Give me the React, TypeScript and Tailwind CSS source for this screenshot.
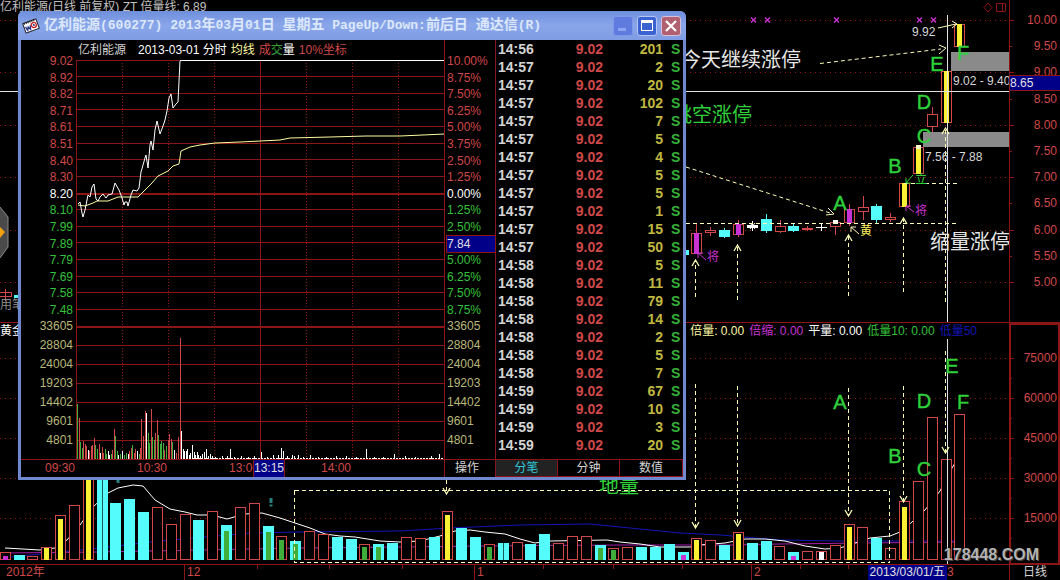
import { useState } from "react";

const RED = "#d04848";
const GREEN = "#2fd03a";
const CYAN = "#54fcfc";
const YELLOW = "#fcf034";
const MAGENTA = "#c832d2";
const DASH = "#fcfcb4";
const GRID = "#8c1616";

const fills: Record<string, string> = {
  r: RED,
  g: "#3fae3a",
  c: CYAN,
  y: YELLOW,
  m: MAGENTA,
  w: "#ffffff",
};

const priceTicks = ["10.00", "9.50", "9.00", "8.50", "8.00", "7.50", "7.00", "6.50", "6.00", "5.50", "5.00"];
const volumeTicks = ["75000", "60000", "45000", "30000", "15000"];
const minutePrices = [
  "9.02", "8.92", "8.82", "8.71", "8.61", "8.51", "8.40", "8.30",
  "8.20", "8.10", "7.99", "7.89", "7.79", "7.69", "7.58", "7.48",
];
const minutePercents = [
  "10.00%", "8.75%", "7.50%", "6.25%", "5.00%", "3.75%", "2.50%", "1.25%",
  "0.00%", "1.25%", "2.50%", "7.84", "5.00%", "6.25%", "7.50%", "8.75%",
];
const minuteVolumes = ["33605", "28804", "24004", "19203", "14402", "9601", "4801"];

const trades: [string, number][] = [
  ["14:56", 201], ["14:57", 2], ["14:57", 20], ["14:57", 102], ["14:57", 7], ["14:57", 5],
  ["14:57", 4], ["14:57", 5], ["14:57", 5], ["14:57", 1], ["14:57", 15], ["14:57", 50],
  ["14:58", 5], ["14:58", 11], ["14:58", 79], ["14:58", 14], ["14:58", 2], ["14:58", 5],
  ["14:58", 7], ["14:59", 67], ["14:59", 10], ["14:59", 3], ["14:59", 20],
];

// x, body top, body bottom, wick top, wick bottom, kind, inner fill
type Candle = [number, number, number, number, number, string, string?];
const candles: Candle[] = [
  [678, 250, 254, 250, 254, "c"],
  [691, 233, 253, 224, 254, "r", "m"],
  [705, 230, 232, 227, 236, "r"],
  [719, 230, 236, 228, 238, "c"],
  [733, 224, 234, 220, 237, "r", "m"],
  [747, 225, 227, 221, 231, "w"],
  [761, 219, 230, 214, 233, "c"],
  [775, 226, 231, 220, 233, "r"],
  [788, 226, 230, 224, 232, "c"],
  [802, 228, 229, 226, 231, "r"],
  [816, 227, 227, 223, 231, "w"],
  [830, 222, 226, 220, 235, "r"],
  [844, 209, 222, 204, 226, "r", "m"],
  [858, 207, 211, 196, 220, "r"],
  [871, 206, 219, 204, 223, "c"],
  [885, 217, 219, 213, 222, "r"],
  [899, 183, 206, 183, 206, "r", "y"],
  [913, 147, 173, 147, 173, "r", "y"],
  [927, 114, 126, 107, 132, "r"],
  [941, 71, 122, 71, 122, "r", "y"],
  [954, 24, 46, 24, 46, "r", "y"],
];

// x, top, kind, inner kind, inner top
type VolumeBar = [number, number, string, string?, number?];
const volumes: VolumeBar[] = [
  [0, 552, "r", "m", 556], [14, 555, "c"], [27, 556, "r"], [41, 547, "r", "y", 548], [55, 515, "r", "y", 519],
  [69, 505, "r"], [83, 470, "r", "y", 472], [97, 470, "c"], [110, 503, "c"], [124, 499, "c"], [138, 512, "c"],
  [152, 507, "r"], [166, 524, "r"], [180, 514, "r"], [193, 520, "c"], [207, 511, "r"], [221, 525, "c", "g", 531],
  [235, 507, "r"], [249, 503, "r"], [263, 526, "c", "g", 532], [276, 536, "r", "g", 540], [290, 541, "c", "g", 544],
  [304, 531, "r"], [318, 534, "r"], [332, 537, "c"], [346, 539, "c"], [359, 544, "r", "g", 547],
  [373, 544, "c", "g", 547], [387, 543, "c"], [401, 537, "r"], [415, 538, "r"], [429, 537, "c"],
  [442, 511, "r", "y", 515], [456, 528, "c"], [470, 537, "c"], [484, 544, "r", "g", 547], [498, 543, "c"],
  [512, 542, "r"], [525, 544, "c"], [539, 534, "c"], [553, 543, "r"], [567, 536, "r"], [581, 536, "r"],
  [595, 545, "c", "g", 548], [608, 548, "r", "g", 550], [622, 547, "r"], [636, 547, "c"], [650, 547, "c"],
  [664, 544, "c"], [678, 552, "c", "m", 555], [691, 538, "r", "y", 540], [705, 540, "r"], [719, 545, "c"],
  [733, 532, "r", "y", 534], [747, 543, "c"], [761, 541, "c"], [774, 546, "r"], [788, 552, "c", "m", 556],
  [802, 551, "r"], [816, 551, "r", "w", 552], [830, 545, "r"], [844, 524, "r", "y", 527], [857, 527, "r"],
  [871, 538, "c"], [885, 548, "r"], [899, 501, "r", "y", 507], [913, 481, "r"], [927, 417, "r"],
  [941, 459, "r"], [954, 414, "r"],
];

// x, top, kind
const minuteBars: [number, number, string][] = [
  [77, 404, "g"], [79, 418, "r"], [80, 442, "g"], [82, 448, "g"], [83, 441, "r"], [85, 444, "r"], [86, 446, "r"],
  [88, 450, "w"], [89, 451, "r"], [91, 446, "r"], [92, 445, "r"], [94, 438, "r"], [95, 445, "g"], [97, 449, "g"],
  [99, 444, "r"], [100, 453, "w"], [102, 447, "r"], [103, 453, "r"], [105, 449, "g"], [106, 454, "g"], [108, 451, "w"],
  [109, 455, "w"], [111, 454, "g"], [112, 450, "r"], [114, 429, "r"], [115, 436, "g"], [117, 451, "g"],
  [118, 455, "w"], [120, 454, "g"], [122, 451, "w"], [124, 455, "g"], [126, 453, "g"], [128, 454, "w"],
  [129, 451, "r"], [131, 448, "r"], [132, 445, "g"], [134, 453, "r"], [135, 449, "r"], [137, 451, "w"],
  [139, 454, "g"], [140, 448, "r"], [141, 419, "r"], [143, 436, "r"], [145, 411, "r"], [146, 413, "w"],
  [148, 433, "g"], [149, 443, "g"], [151, 409, "r"], [152, 437, "g"], [154, 440, "g"], [155, 433, "r"],
  [157, 420, "r"], [158, 435, "g"], [160, 444, "g"], [161, 441, "g"], [163, 443, "g"], [164, 450, "r"],
  [166, 446, "g"], [168, 440, "r"], [169, 434, "r"], [171, 439, "r"], [172, 442, "g"], [174, 450, "w"],
  [176, 453, "r"], [178, 437, "r"], [180, 338, "r"], [181, 431, "w"], [183, 449, "w"], [184, 451, "w"],
  [186, 451, "w"], [187, 449, "w"], [189, 455, "w"], [190, 453, "w"], [192, 445, "w"], [194, 452, "w"],
  [195, 455, "w"], [197, 452, "w"], [198, 455, "w"], [200, 456, "w"], [202, 454, "w"], [204, 452, "w"],
  [206, 449, "w"], [208, 456, "w"], [210, 454, "w"], [212, 456, "w"], [215, 457, "w"], [222, 456, "w"],
  [227, 456, "w"], [230, 449, "w"], [234, 457, "w"], [241, 456, "w"], [248, 457, "w"], [254, 456, "w"],
  [261, 452, "w"], [267, 457, "w"], [273, 455, "w"], [278, 455, "w"], [281, 448, "w"], [283, 451, "w"],
  [287, 456, "w"], [292, 455, "w"], [294, 456, "w"], [298, 455, "w"], [303, 457, "w"], [310, 455, "w"],
  [318, 457, "w"], [326, 457, "w"], [336, 456, "w"], [346, 456, "w"], [356, 457, "w"], [366, 449, "w"],
  [374, 457, "w"], [383, 457, "w"], [394, 454, "w"], [405, 456, "w"], [415, 457, "w"], [431, 456, "w"],
  [439, 454, "w"],
];

const upArrows = [[695, 297, 260], [737, 300, 245], [848, 296, 235], [903, 292, 218], [945, 302, 128]];
const downArrows = [[446, 480, 494], [695, 384, 528], [737, 386, 526], [848, 388, 516], [903, 386, 502], [945, 351, 453]];

const Letter = ({ x, y, children }: { x: number; y: number; children: string }) => (
  <text x={x} y={y} dy={7} fontSize={20} textAnchor="middle" fill={GREEN} stroke={GREEN} strokeWidth={0.4}>
    {children}
  </text>
);

const DashArrow = ({ x, from, to }: { x: number; from: number; to: number }) => {
  const back = from > to ? 6 : -6;
  return (
    <g fill="none" stroke={DASH}>
      <path d={`M${x + 0.5} ${from}V${to}`} strokeDasharray="4 3" />
      <path d={`M${x - 3} ${to + back}L${x + 0.5} ${to}L${x + 4} ${to + back}`} strokeWidth={1.3} />
    </g>
  );
};

const PriceChart = () => (
  <svg viewBox="0 14 1009 308" className="block min-h-0 w-full flex-1 overflow-visible">
    <g shapeRendering="crispEdges">
      {[20, 72, 125, 177, 230, 282].map((y) => (
        <path key={y} d={`M0 ${y + 0.5}H1009`} stroke={GRID} strokeDasharray="1 4" />
      ))}
      {priceTicks.map((t, i) => (
        <path key={t} d={`M1009 ${20.5 + Math.round(i * 26.2)}h${i % 2 ? 3 : 5}`} stroke={GRID} />
      ))}
      <rect x={951} y={52} width={58} height={19} fill="#8a8a8a" />
      <rect x={923} y={132} width={86} height={15} fill="#8a8a8a" />
      {candles.map(([x, top, bottom, high, low, kind, inner]) => (
        <g key={x}>
          <path d={`M${x + 5.5} ${high}V${low}`} stroke={fills[kind]} />
          {kind === "r" ? (
            <rect x={x + 0.5} y={top + 0.5} width={10} height={bottom - top} fill="#000" stroke={RED} />
          ) : (
            <rect x={x} y={top} width={11} height={bottom - top + 1} fill={fills[kind]} />
          )}
          {inner && <rect x={x + 3} y={top} width={5} height={bottom - top + 1} fill={fills[inner]} />}
        </g>
      ))}
      <rect x={833} y={220} width={5} height={4} fill="#fff" />
      <rect x={916} y={145} width={5} height={4} fill="#fff8c8" />
      <path d="M0 292.5H11V296H0M5.5 289V301" fill="none" stroke={RED} />
      <rect x={14} y={295} width={6} height={3} fill={CYAN} />
      <path d="M0 91.5H1009M947.5 15V322" stroke="#e0e0e0" />
    </g>
    <path d="M750 223l5 6M755 223l-5 6" stroke="#fff" />

    <g stroke={MAGENTA} strokeWidth={1.4}>
      {[753, 767, 836, 919, 933].map((x) => (
        <path key={x} d={`M${x - 2} 17.500l5 5M${x + 3} 17.500l-5 5`} />
      ))}
    </g>

    <g fill="none" stroke={DASH} strokeDasharray="4 3">
      <path d="M686 223.5H958M904 183.5H960" />
      <path d="M820 63.5L941 49M686 167L830 213" />
    </g>
    <g fill="none" stroke={DASH}>
      <path d="M939 45l7 3l-7 6M828 208l6 6l-8 1" />
      <path d="M938 28l18-4M952 21l5 3l-5 4" />
      <path d="M859 234l-8-7v5M851 227h5" />
    </g>
    <g fill="none" stroke={MAGENTA}>
      <path d="M706 260l-8-7v5M698 253h5M914 212l-8-6v5M906 206h5" />
    </g>
    <path d="M913 175l-7 8v-5M906 183h5" fill="none" stroke={GREEN} />
    {upArrows.map(([x, from, to]) => (
      <DashArrow key={x} x={x} from={from} to={to} />
    ))}

    <g fontSize={12} fill="#d8d8d8">
      <text x={912} y={36}>9.92</text>
      <text x={953} y={85}>9.02 - 9.40</text>
      <text x={925} y={161}>7.56 - 7.88</text>
      <text x={0} y={309} fill="#8a8a8a">用笔</text>
      <text x={707} y={261} fill={MAGENTA}>将</text>
      <text x={915} y={215} fill={MAGENTA}>将</text>
      <text x={860} y={235} fill="#fcf060">黄</text>
      <text x={915} y={184} fill={GREEN}>立</text>
    </g>
    <g fontSize={20} fill="#e6e6e6">
      <text x={681} y={67}>今天继续涨停</text>
      <text x={672} y={122} fill={GREEN}>跳空涨停</text>
      <text x={930} y={249}>缩量涨停</text>
    </g>
    <Letter x={840} y={203}>A</Letter>
    <Letter x={895} y={166}>B</Letter>
    <Letter x={924} y={136}>C</Letter>
    <Letter x={924} y={102}>D</Letter>
    <Letter x={937} y={64}>E</Letter>
    <Letter x={963} y={53}>F</Letter>

    <path d="M0 207L8 217V247L0 258" fill="#4a4a4a" stroke="#8a8a8a" />
    <path d="M0 227L5 232L0 238Z" fill="#f0a010" />
  </svg>
);

const VolumeChart = () => (
  <svg viewBox="0 339 1009 225" className="block min-h-0 w-full flex-1 overflow-visible">
    <g shapeRendering="crispEdges">
      {[358, 398, 438, 478, 518].map((y) => (
        <g key={y} stroke={GRID}>
          <path d={`M0 ${y + 0.5}H1009`} strokeDasharray="1 4" />
          <path d={`M1009 ${y + 0.5}h5M1009 ${y + 20.5}h3`} />
        </g>
      ))}
      {[257, 329, 402, 543, 613, 682, 800, 848].map((x) => (
        <path key={x} d={`M${x + 0.5} 565v4`} stroke={GRID} />
      ))}
    </g>
    <g fill="none">
      <path
        d="M0 558L100 548L150 542L250 533L300 532L400 531L450 528L520 525L590 524L630 528L680 533L720 535L780 540L840 541L955 541"
        stroke="#1414b4"
      />
      <path d="M0 553L100 552L200 550L300 548L400 547L480 546L620 545L730 545L780 544L955 542" stroke="#a01ea8" />
      <path
        d="M5 548L40 550L55 548L67 540L80 525L93 507L108 493L118 488L133 485L143 486L155 500L170 509L185 512L197 515L212 515L227 519L245 514L262 513L280 518L295 523L310 528L325 534L340 536L355 537L380 541L400 542L420 541L440 536L455 531L470 530L485 532L505 534L520 539L535 543L550 541L607 540L620 542L640 544L660 547L690 547L700 545L725 543L745 539L765 539L785 541L805 546L825 549L840 548L855 543L870 538L890 536L900 532L912 522L925 510L940 491L952 468L960 455"
        stroke="#fff"
      />
    </g>
    <g shapeRendering="crispEdges">
      {volumes.map(([x, top, kind, inner, innerTop]) => (
        <g key={x}>
          {kind === "r" ? (
            <rect x={x + 0.5} y={top + 0.5} width={10} height={559 - top} fill="#000" stroke={RED} />
          ) : (
            <rect x={x} y={top} width={11} height={560 - top} fill={fills[kind]} />
          )}
          {inner && <rect x={x + 3} y={innerTop} width={5} height={560 - innerTop!} fill={fills[inner]} />}
        </g>
      ))}
      <path d="M102.5 478V560M503.5 543V560" stroke="#1c5c5c" />
      <path d="M947.5 339V564" stroke="#e0e0e0" />
      <path d="M294.5 490.5H889.5V562.5H294.5Z" fill="none" stroke={DASH} strokeDasharray="4 3" />
    </g>
    {downArrows.map(([x, from, to]) => (
      <DashArrow key={x} x={x} from={from} to={to} />
    ))}
    <path d="M271 498v5M271 504.500v2M118 480v3" stroke="#2a8080" strokeWidth={3} />
    <text x={599} y={493} fontSize={20} fill={GREEN}>地量</text>
    <Letter x={840} y={402}>A</Letter>
    <Letter x={895} y={456}>B</Letter>
    <Letter x={924} y={469}>C</Letter>
    <Letter x={924} y={401}>D</Letter>
    <Letter x={952} y={366}>E</Letter>
    <Letter x={963} y={402}>F</Letter>
  </svg>
);

const MinuteChart = () => (
  <svg viewBox="76 60 368 399" className="block min-h-0 w-full flex-1">
    <g shapeRendering="crispEdges" stroke={GRID}>
      {[76, 93, 109, 126, 143, 159, 176, 209, 226, 242, 259, 276, 292, 309, 345, 364, 383, 402, 421, 440].map((y) => (
        <path key={y} d={`M76 ${y + 0.5}H445`} />
      ))}
      <path d="M76 60.5H445" />
      <path d="M76 194H445M76 327H445" strokeWidth={2} />
      <path d="M76.5 60V459M260.5 60V459" />
      {[122, 168, 214, 306, 352, 398].map((x) => (
        <path key={x} d={`M${x + 0.5} 60V459`} strokeDasharray="1 2" />
      ))}
    </g>
    <g shapeRendering="crispEdges">
      {minuteBars.map(([x, top, kind]) => (
        <rect key={x} x={x} y={top} width={1} height={459 - top} fill={fills[kind]} />
      ))}
      <path d="M183 458.5H445" stroke="#fff" strokeDasharray="2 1" />
      <path d="M180 60.5H445" stroke="#fff" />
    </g>
    <path
      fill="none"
      stroke="#fcfca0"
      d="M78 205L85 206L93 203L97 201L108 201L118 197L138 197L145 190L152 183L158 176L168 171L173 166L179 164L181 151L190 147L200 145L215 143L240 142L260 141L280 140L290 138L330 137L366 136L400 136L445 134"
    />
    <path
      fill="none"
      stroke="#fff"
      d="M78 204L80 202L82 213L83 217L85 210L87 200L88 195L90 197L92 187L94 184L96 199L98 201L100 197L103 194L106 198L108 195L112 194L115 183L119 190L122 198L124 205L125 202L127 202L128 206L131 195L133 190L137 191L139 188L141 172L143 165L145 158L146 155L148 168L150 145L151 141L153 150L155 130L157 121L160 134L163 126L165 120L167 111L169 98L171 94L173 108L176 104L178 102L180 61"
    />
  </svg>
);

const ScaleColumn = ({ prices, className }: { prices: string[]; className: string }) => (
  <div className={`flex flex-col pt-[13px] pb-[11px] leading-4 ${className}`}>
    <ul className="flex flex-[265] flex-col justify-between">
      {prices.map((p, i) => (
        <li
          key={i}
          className={
            p === "7.84"
              ? "bg-[#000088] text-[#e0e0e0] outline outline-[#8c1616]"
              : i < 8
                ? "text-[#d04848]"
                : i === 8
                  ? "text-white"
                  : "text-[#35c03a]"
          }
        >
          {p}
        </li>
      ))}
    </ul>
    <ul className="flex flex-[130] flex-col justify-between text-[#b8b878]">
      {minuteVolumes.map((v) => (
        <li key={v}>{v}</li>
      ))}
    </ul>
  </div>
);

const AppIcon = () => (
  <svg viewBox="0 0 18 16" className="h-4 w-[18px]">
    <g transform="rotate(-20 9 8)">
      <rect x="2" y="3" width="14" height="10" fill="#fff" stroke="#222" />
      <path d="M3 3.5h12" stroke="#111" strokeWidth="2" strokeDasharray="1 1" />
      <path d="M3.500 7l1 4l1.500-3l1.500 3l1-4" fill="none" stroke="#203080" strokeWidth="1.300" />
      <circle cx="12" cy="8" r="2.500" fill="none" stroke="#d02020" strokeWidth="1.300" />
      <circle cx="12" cy="8" r="1" fill="#203080" />
    </g>
  </svg>
);

const TitleBar = () => {
  const title = "亿利能源(600277) 2013年03月01日 星期五 PageUp/Down:前后日 通达信(R)";
  return (
    <header className="flex h-[29px] items-center gap-1 rounded-t-md bg-linear-to-b from-[#6f8fdc] via-[#8aa6ea] to-[#7f9ce4] pr-[5px] pl-1">
      <AppIcon />
      <h1 className="flex-1 truncate font-['Liberation_Mono','Noto_Sans_CJK_SC',monospace] text-[13px] leading-5 font-bold whitespace-pre text-[#dce8fa]">
        {title.split(/([\u4e00-\u9fff]+)/).map((part, i) => (
          <span key={i} className={i % 2 ? "text-sm leading-5" : ""}>
            {part}
          </span>
        ))}
      </h1>
      <button aria-label="最小化" className="flex size-5 items-end rounded-[3px] border border-[#8098e8] bg-[#5f7be0] p-1">
        <span className="h-[3px] w-2 bg-[#8ea4f0]" />
      </button>
      <button aria-label="还原" className="grid size-5 place-items-center rounded-[3px] border border-[#b4c6f6] bg-[#3a62d0]">
        <span className="h-[11px] w-3 border border-t-[3px] border-white" />
      </button>
      <button aria-label="关闭" className="grid size-5 place-items-center rounded-[3px] border border-[#d8c0d8] bg-[#b06070]">
        <svg viewBox="0 0 12 12" className="size-3">
          <path d="M1 1l10 10M11 1L1 11" stroke="#fff" strokeWidth="2.200" />
        </svg>
      </button>
    </header>
  );
};

const TradePanel = () => {
  const [tab, setTab] = useState("分笔");
  return (
    <section className="flex w-[188px] flex-col justify-between border-l border-[#8c1616]">
      <table className="w-full table-fixed text-sm leading-[18px] font-bold">
        <tbody>
          {trades.map(([time, lots], i) => (
            <tr key={i}>
              <td className="w-[50px] pl-0.5 text-[#d4d4d4]">{time}</td>
              <td className="w-[57px] text-right text-[#d04848]">9.02</td>
              <td className="w-[60px] text-right text-[#c0b840]">{lots}</td>
              <td className="pr-1 pl-2 text-[#35b03a]">S</td>
            </tr>
          ))}
        </tbody>
      </table>
      <div className="grid h-[18px] grid-cols-3 divide-x divide-[#8c1616] border border-l-0 border-[#8c1616]">
        {["分笔", "分钟", "数值"].map((name) => (
          <button
            key={name}
            onClick={() => setTab(name)}
            className={tab === name ? "bg-[#222] leading-4 text-[#30c8d8]" : "leading-4 text-[#d4d4d4]"}
          >
            {name}
          </button>
        ))}
      </div>
    </section>
  );
};

const MinuteWindow = () => (
  <div className="absolute top-[11px] left-[18px] w-[668px] rounded-t-md bg-[#7088d0]">
    <TitleBar />
    <div className="mx-[3px] flex border-b-[3px] border-[#7088d0] bg-black">
      <section className="flex flex-1 flex-col">
        <div className="flex flex-1">
          <ScaleColumn prices={minutePrices} className="w-[55px] pr-[3px] text-right" />
          <div className="flex min-w-0 flex-1 flex-col">
            <div className="flex h-5 items-center gap-1 pl-0.5 whitespace-nowrap text-white">
              <span className="mr-2 text-[#d4d4d4]">亿利能源</span>
              <span>2013-03-01 分时</span>
              <span className="text-[#fcf8a0]">均线</span>
              <span>
                <span className="text-[#d04848]">成</span>
                <span className="text-[#35a03a]">交</span>量
              </span>
              <span className="text-[#d04848]">10%坐标</span>
            </div>
            <MinuteChart />
          </div>
          <ScaleColumn prices={minutePercents} className="w-[51px] border-l border-[#8c1616] pl-0.5" />
        </div>
        <div className="flex h-[18px] border-t border-[#8c1616] leading-[17px]">
          <div className="relative grid flex-1 grid-cols-[repeat(4,92px)] pl-6 text-[#d04848]">
            <span>09:30</span>
            <span>10:30</span>
            <span>13:00</span>
            <span>14:00</span>
            <span className="absolute left-[232px] border-x border-[#8c1616] bg-[#000088] text-[#e0e0e0]">13:15</span>
          </div>
          <button className="w-[51px] border-l border-[#8c1616] pr-1.5 text-[#d4d4d4]">操作</button>
        </div>
      </section>
      <TradePanel />
    </div>
  </div>
);

export default function App() {
  return (
    <main className="relative grid h-screen min-h-[580px] grid-cols-[1fr_51px] grid-rows-[323fr_242fr_15fr] overflow-hidden bg-black font-['Liberation_Sans','Noto_Sans_CJK_SC',sans-serif] text-xs">
      <section className="flex min-h-0 flex-col border-b border-[#8c1616]">
        <div className="flex h-[14px] items-center justify-between pr-0.5 leading-[14px] text-[#c0c0c0]">
          <h2>亿利能源(日线 前复权) ZT 倍量线: 6.89</h2>
          <svg viewBox="0 0 24 12" className="h-3 w-6" fill="none" stroke="#8c1616">
            <path d="M5 2l4 4.500l-4 4.500l-4-4.500zM13.500 2.500h9v8h-9zM19.500 2.500v8" />
          </svg>
        </div>
        <PriceChart />
      </section>
      <div className="relative border-b border-l border-[#8c1616] pt-3 pr-[3px] pb-8">
        <ul className="flex h-full flex-col justify-between text-right leading-4 text-[#d04848]">
          {priceTicks.map((t) => (
            <li key={t}>{t}</li>
          ))}
        </ul>
        <span className="absolute inset-x-0 top-[75px] border-y border-[#8c1616] bg-[#000088] leading-[14px] text-[#e0e0e0]">
          8.65
        </span>
      </div>

      <section className="flex min-h-0 flex-col border-b border-[#8c1616]">
        <div className="flex h-4 items-center gap-[5px] pr-8 leading-4 text-white">
          <span className="mr-auto">黄金</span>
          <span className="text-[#fcf8a0]">倍量: 0.00</span>
          <span className="text-[#c832d2]">倍缩: 0.00</span>
          <span>平量: 0.00</span>
          <span className="text-[#35c03a]">低量10: 0.00</span>
          <span className="text-[#1414b4]">低量50</span>
        </div>
        <VolumeChart />
      </section>
      <ul className="flex flex-col justify-between border-2 border-[#8c1616] pt-[25px] pr-px pb-[37px] text-right leading-4 text-[#d04848]">
        {volumeTicks.map((t) => (
          <li key={t}>{t}</li>
        ))}
      </ul>

      <div className="relative grid grid-cols-[184fr_290fr_277fr_196fr_62fr] leading-[15px] text-[#d04848]">
        <span className="pl-1.5">2012年</span>
        <span className="border-l border-[#8c1616] pl-0.5">12</span>
        <span className="border-l border-[#8c1616] pl-0.5">1</span>
        <span className="flex justify-between border-l border-[#8c1616] pl-0.5">
          2<span className="bg-[#000088] px-0.5 text-[#e0e0e0]">2013/03/01/五</span>
        </span>
        <span>3</span>
      </div>
      <span className="border-l border-[#8c1616] pl-[13px] leading-[15px] text-[#d4d4d4]">日线</span>

      <span className="absolute right-[21px] bottom-[13px] text-base leading-6 font-bold text-[#b4b4b4] text-shadow-[0_0_2px_#000,1px_1px_0_#555]">
        178448.COM
      </span>

      <MinuteWindow />
    </main>
  );
}
